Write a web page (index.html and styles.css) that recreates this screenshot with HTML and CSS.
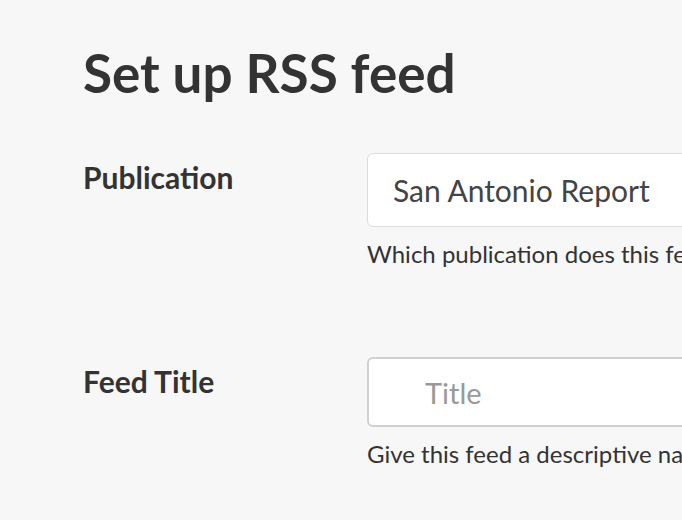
FILE: index.html
```html
<!DOCTYPE html>
<html lang="en">
<head>
<meta charset="utf-8">
<title>Set up RSS feed</title>
<link rel="stylesheet" href="styles.css">
</head>
<body>
<main class="page">
  <h1 class="heading">Set up RSS feed</h1>
  <form class="form">
    <div class="row row-first">
      <label class="label" for="pub">Publication</label>
      <div class="field">
        <div class="input input-select" id="pub">San Antonio Report</div>
        <p class="help">Which publication does this feed belong to?</p>
      </div>
    </div>
    <div class="row">
      <label class="label" for="title">Feed Title</label>
      <div class="field">
        <input class="input input-text" id="title" type="text" placeholder="Title">
        <p class="help">Give this feed a descriptive name so you can find it later.</p>
      </div>
    </div>
  </form>
</main>
</body>
</html>
```
FILE: styles.css
```css
html, body {
  margin: 0;
  padding: 0;
  background: #f7f7f7;
  overflow: hidden;
}
body {
  width: 682px;
  height: 520px;
  font-family: "Lato", "Open Sans", sans-serif;
  color: #333;
}
.page {
  width: 1200px;
  padding: 38px 0 0 83px;
  box-sizing: border-box;
}
.heading {
  margin: 0;
  font-size: 53px;
  line-height: 70px;
  font-weight: 700;
  color: #333;
}
.form {
  margin-top: 45px;
}
.row {
  display: grid;
  grid-template-columns: 284px 700px;
  margin-top: 87px;
}
.row-first {
  margin-top: 0;
}
.label {
  font-size: 30px;
  font-weight: 700;
  line-height: 40px;
  padding-top: 4px;
  color: #333;
}
.input {
  display: block;
  box-sizing: border-box;
  width: 700px;
  background: #fff;
  border-radius: 6px;
  font-family: inherit;
  font-size: 30px;
  color: #444;
  margin: 0;
  outline: none;
}
.input-select {
  height: 74px;
  border: 1.5px solid #dcdcdc;
  padding: 0 0 0 25px;
  line-height: 72px;
}
.input-text {
  height: 70px;
  border: 2px solid #d0d0d0;
  padding: 0 0 0 56px;
  font-size: 29px;
}
.input-text::placeholder {
  color: #999;
}
.help {
  margin: 11px 0 0;
  font-size: 24px;
  line-height: 32px;
  color: #333;
  white-space: nowrap;
}
```
